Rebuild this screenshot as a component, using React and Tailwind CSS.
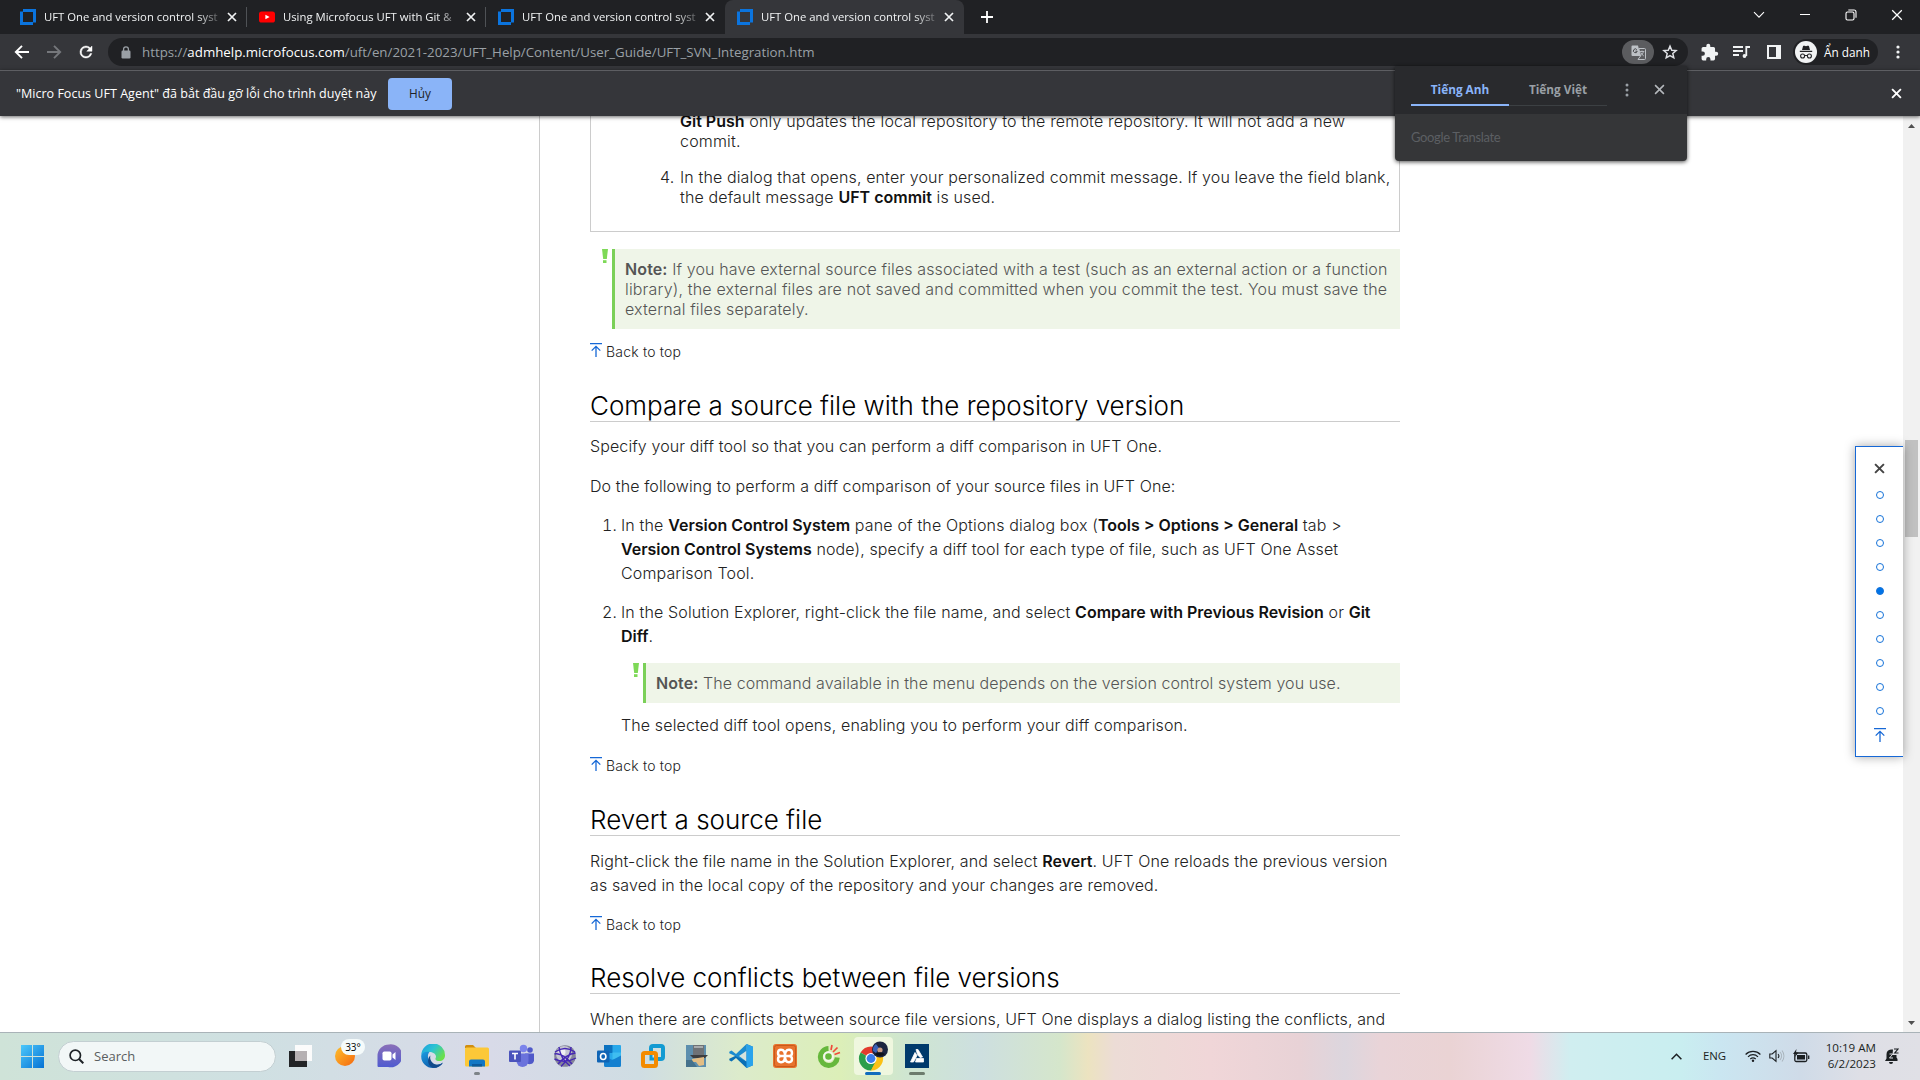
import React from 'react';

const TABS = [
  { title: 'UFT One and version control syst', kind: 'mf' },
  { title: 'Using Microfocus UFT with Git &', kind: 'yt' },
  { title: 'UFT One and version control syst', kind: 'mf' },
  { title: 'UFT One and version control syst', kind: 'mf', active: true },
];

function Cross({ size = 10, stroke = 1.6, className = '' }) {
  return (
    <svg width={size} height={size} viewBox="0 0 10 10" className={className} fill="none" stroke="currentColor" strokeWidth={stroke}>
      <path d="M1 1L9 9M9 1L1 9" />
    </svg>
  );
}

function Favicon({ kind }) {
  if (kind === 'yt') {
    return (
      <svg width="16" height="16" viewBox="0 0 16 16" className="shrink-0">
        <rect x="0" y="2.5" width="16" height="11" rx="2.6" fill="#f00" />
        <path d="M6.4 5.7L10.6 8L6.4 10.3Z" fill="#fff" />
      </svg>
    );
  }
  return (
    <svg width="16" height="16" viewBox="0 0 16 16" className="shrink-0" fill="#0b74de">
      <path d="M3 0H16V13.5H13V3H3Z" />
      <path d="M0 2.5H3V13H13V16H0Z" />
    </svg>
  );
}

function Tab({ tab, separator }) {
  return (
    <div className={`relative flex h-[34px] w-[239px] items-center pl-3 ${tab.active ? 'rounded-t-lg bg-[#35363a]' : ''}`}>
      <Favicon kind={tab.kind} />
      <div className="ml-2 w-[174px] whitespace-nowrap text-[11.3px] leading-[18px] text-[#f1f3f4] [mask-image:linear-gradient(to_right,#000_88%,rgba(0,0,0,0.25))]">
        {tab.title}
      </div>
      <Cross size={10} stroke={1.7} className="ml-[9px] text-[#f1f3f4]" />
      {separator && <div className="absolute top-[7px] right-0 h-5 w-px bg-[#4f5256]" />}
    </div>
  );
}

function TabStrip() {
  return (
    <div className="flex h-[34px] bg-[#202124] pl-2">
      {TABS.map((tab, i) => (
        <Tab key={i} tab={tab} separator={i < 2} />
      ))}
      <div className="flex w-[46px] items-center justify-center">
        <svg width="14" height="14" viewBox="0 0 14 14" stroke="#fff" strokeWidth="1.8"><path d="M7 1V13M1 7H13" /></svg>
      </div>
      <div className="ml-auto flex text-white">
        <div className="flex h-[29px] w-[46px] items-center justify-center">
          <svg width="12" height="8" viewBox="0 0 12 8" fill="none" stroke="currentColor" strokeWidth="1.1"><path d="M1 1.2L6 6.2L11 1.2" /></svg>
        </div>
        <div className="flex h-[29px] w-[46px] items-center justify-center">
          <div className="h-px w-2.5 bg-white" />
        </div>
        <div className="flex h-[29px] w-[46px] items-center justify-center">
          <svg width="12" height="12" viewBox="0 0 12 12" fill="none" stroke="currentColor" strokeWidth="1.1">
            <rect x="1" y="3" width="8" height="8" rx="1.5" /><path d="M3.3 1H9A2 2 0 0 1 11 3V8.8" />
          </svg>
        </div>
        <div className="flex h-[29px] w-[46px] items-center justify-center">
          <Cross size={12} stroke={1.05} />
        </div>
      </div>
    </div>
  );
}

function Toolbar() {
  return (
    <div className="flex h-[36px] items-center bg-[#35363a] pb-1 pt-1">
      <div className="flex w-[44px] items-center justify-center">
        <svg width="16" height="16" viewBox="0 0 16 16" fill="none" stroke="#fff" strokeWidth="1.9"><path d="M15 8H2.2M8 1.8L1.8 8L8 14.2" /></svg>
      </div>
      <div className="flex w-[20px] items-center justify-center">
        <svg width="16" height="16" viewBox="0 0 16 16" fill="none" stroke="#75777b" strokeWidth="1.9" className="shrink-0"><path d="M1 8H13.8M8 1.8L14.2 8L8 14.2" /></svg>
      </div>
      <div className="flex w-[44px] items-center justify-center">
        <svg width="18" height="18" viewBox="0 0 24 24" fill="#fff" className="shrink-0"><path d="M17.65 6.35A7.96 7.96 0 0 0 12 4a8 8 0 1 0 7.73 10h-2.08A6 6 0 1 1 12 6c1.66 0 3.14.69 4.22 1.78L13 11h7V4z" stroke="#fff" strokeWidth=".6" /></svg>
      </div>
      <div className="flex h-7 w-[1580px] items-center rounded-full bg-[#202124] pl-[13px] pr-[10px]">
        <svg width="10" height="13" viewBox="0 0 10 13"><rect x="0.5" y="4.5" width="9" height="8" rx="1.2" fill="#9aa0a6" /><path d="M2.6 5V3.2a2.4 2.4 0 0 1 4.8 0V5" fill="none" stroke="#9aa0a6" strokeWidth="1.3" /></svg>
        <div className="ml-[11px] whitespace-nowrap text-[13.3px] leading-5 text-[#9aa0a6]">
          https://<span className="text-white">admhelp.microfocus.com</span>/uft/en/2021-2023/UFT_Help/Content/User_Guide/UFT_SVN_Integration.htm
        </div>
        <div className="ml-auto flex h-6 w-8 items-center justify-center rounded-full bg-[#5b5c5f]">
          <svg width="15" height="15" viewBox="0 0 15 15">
            <path d="M1.5 .5H7L9.5 11H1.5A1 1 0 0 1 .5 10V1.5A1 1 0 0 1 1.5 .5Z" fill="#bdc1c6" />
            <path d="M7.8 3.5H13.5A1 1 0 0 1 14.5 4.5V13.5A1 1 0 0 1 13.5 14.5H7L9.5 11Z" fill="none" stroke="#bdc1c6" />
            <path d="M5.8 4.6A1.9 1.9 0 1 0 6.2 6.2H4.4" fill="none" stroke="#46474a" strokeWidth="1" />
            <path d="M9 6.5H13.3M11 5.5V6.5M12.4 6.5C12 8.6 10.8 10 9.6 10.8M9.8 7.5C10.5 9 11.5 10 12.8 11" fill="none" stroke="#bdc1c6" strokeWidth=".9" />
          </svg>
        </div>
        <svg width="16" height="16" viewBox="0 0 24 24" fill="none" stroke="#dfe1e5" strokeWidth="2.2" className="ml-2"><path d="M12 3.2L14.6 9.3L21.2 9.9L16.2 14.2L17.7 20.7L12 17.3L6.3 20.7L7.8 14.2L2.8 9.9L9.4 9.3Z" /></svg>
      </div>
      <div className="ml-[12px] flex items-center">
        <svg width="19" height="19" viewBox="0 0 24 24" fill="#f1f3f4"><path d="M20.5 11H19V7a2 2 0 0 0-2-2h-4V3.5a2.5 2.5 0 0 0-5 0V5H4a2 2 0 0 0-2 2v3.8h1.5a2.7 2.7 0 0 1 0 5.4H2V20a2 2 0 0 0 2 2h3.8v-1.5a2.7 2.7 0 0 1 5.4 0V22H17a2 2 0 0 0 2-2v-4h1.5a2.5 2.5 0 0 0 0-5z" /></svg>
        <svg width="17" height="14" viewBox="0 0 17 14" className="ml-[14px]" fill="none" stroke="#f1f3f4" strokeWidth="1.8"><path d="M0 2H10M0 6H10M0 10H6M17 2H13.3V11" /><circle cx="11.5" cy="11" r="1.9" fill="#f1f3f4" stroke="none" /></svg>
        <div className="ml-[17px] h-[14px] w-[14px] border-2 border-r-[5px] border-[#f1f3f4]" />
        <div className="ml-[12px] flex h-[26px] w-[85px] items-center rounded-full bg-[#202124] pl-0.5">
          <div className="flex h-[22px] w-[22px] items-center justify-center rounded-full bg-[#f1f3f4]">
            <svg width="14" height="15" viewBox="0 0 14 15" fill="#202124">
              <path d="M4 1.2C4.5.6 5 .8 7 1.2 9 .8 9.5.6 10 1.2L11 5H3ZM.8 5.8H13.2V7H.8Z" />
              <path d="M5.5 10.8Q7 10 8.5 10.8" fill="none" stroke="#202124" />
              <circle cx="3.6" cy="11" r="2" fill="none" stroke="#202124" strokeWidth="1.1" /><circle cx="10.4" cy="11" r="2" fill="none" stroke="#202124" strokeWidth="1.1" />
            </svg>
          </div>
          <span className="ml-[7px] whitespace-nowrap text-[11.8px] leading-4 text-white">Ẩn danh</span>
        </div>
        <svg width="4" height="14" viewBox="0 0 4 14" fill="#f1f3f4" className="ml-[18px]"><circle cx="2" cy="2" r="1.6" /><circle cx="2" cy="7" r="1.6" /><circle cx="2" cy="12" r="1.6" /></svg>
      </div>
    </div>
  );
}

function InfoBar() {
  return (
    <div className="relative z-10 flex h-[46px] items-center border-t border-[#5d5e62] bg-[#35363a] pl-4 pr-[18px] shadow-[0_1px_4px_rgba(0,0,0,0.6)]">
      <div className="w-[360px] whitespace-nowrap text-[12.55px] leading-5 text-white">
        &quot;Micro Focus UFT Agent&quot; đã bắt đầu gỡ lỗi cho trình duyệt này
      </div>
      <button className="ml-[12px] h-8 w-16 rounded bg-[#8ab4f8] text-[11.8px] text-[#202124]">Hủy</button>
      <Cross size={11} stroke={1.7} className="ml-auto text-white" />
    </div>
  );
}

function TranslatePopup() {
  return (
    <div className="absolute top-[66px] left-[1395px] z-20 h-[95px] w-[292px] overflow-hidden rounded-b bg-[#353638] shadow-[0_1px_4px_rgba(0,0,0,0.7)]">
      <div className="flex h-12 items-start bg-[#292a2d] pl-4">
        <div className="flex h-10 w-[98px] items-center justify-center border-b-2 border-[#8ab4f8] pt-[9px] text-[11.8px] font-bold text-[#8ab4f8]">Tiếng Anh</div>
        <div className="flex h-10 w-[98px] items-center justify-center border-b border-[#3c4043] pt-[9px] text-[11.8px] font-bold text-[#9aa0a6]">Tiếng Việt</div>
        <svg width="4" height="14" viewBox="0 0 4 14" fill="#9aa0a6" className="ml-[18px] mt-[17px]"><circle cx="2" cy="2" r="1.5" /><circle cx="2" cy="7" r="1.5" /><circle cx="2" cy="12" r="1.5" /></svg>
        <Cross size={11} stroke={1.4} className="ml-[25px] mt-[18px] text-[#b4b8bc]" />
      </div>
      <div className="pt-[13px] pl-4 font-['Lato'] text-[13px] leading-5 tracking-[-0.35px] text-[#5c5f63]">Google Translate</div>
    </div>
  );
}

function TopArrow() {
  return (
    <svg width="12" height="14" viewBox="0 0 12 14" fill="none" stroke="#1668d6" strokeWidth="1.3">
      <path d="M0 .6H12M6 14V3.3M1.7 7.6L6 3.3L10.3 7.6" />
    </svg>
  );
}

function BackToTop() {
  return (
    <div className="flex h-5 items-start">
      <div className="mt-px"><TopArrow /></div>
      <span className="ml-1 text-sm leading-5 font-light tracking-[0.2px] text-[#222]">Back to top</span>
    </div>
  );
}

function Heading({ children, className = 'mt-[27px]' }) {
  return <h2 className={`${className} h-[33px] whitespace-nowrap border-b border-[#ccc] text-[26px] leading-[34px] font-light tracking-normal text-black`}>{children}</h2>;
}

function Note({ children }) {
  return (
    <div className="flex">
      <svg width="6" height="14" viewBox="0 0 6 14" fill="#7ed957" className="mr-1"><path d="M0 0H6L4.8 10H1.2Z" /><rect x="1" y="11.2" width="3.5" height="2.8" /></svg>
      <div className="flex-1 border-l-[3px] border-[#7bd058] bg-[#eff5e8] py-[10px] pl-[10px] leading-5 text-[#555]">{children}</div>
    </div>
  );
}

function B({ children }) {
  return <b className="font-semibold tracking-normal text-[#111]">{children}</b>;
}

function Article() {
  return (
    <div className="ml-[539px] h-full w-[861px] border-l border-[#ccc] pl-[50px] text-base leading-6 font-light tracking-[0.14px] whitespace-nowrap text-[#222]">
      <div className="flex h-[116px] flex-col border-x border-b border-[#ccc] pl-[69px] leading-5">
        <div className="-mt-[5px] pl-[20px] tracking-[0.18px]">
          <p><B>Git Push</B> only updates the local repository to the remote repository. It will not add a new</p>
          <p>commit.</p>
        </div>
        <div className="mt-4 flex">
          <span className="w-[20px] shrink-0">4.</span>
          <div>
            <p className="tracking-[0.125px]">In the dialog that opens, enter your personalized commit message. If you leave the field blank,</p>
            <p>the default message <B>UFT commit</B> is used.</p>
          </div>
        </div>
      </div>
      <div className="mt-[17px] mb-[13px] pl-[12px]">
        <Note>
          <p className="tracking-[0.125px]"><b className="font-semibold">Note:</b> If you have external source files associated with a test (such as an external action or a function</p>
          <p className="tracking-[0.17px]">library), the external files are not saved and committed when you commit the test. You must save the</p>
          <p>external files separately.</p>
        </Note>
      </div>
      <BackToTop />
      <Heading>Compare a source file with the repository version</Heading>
      <p className="mt-[12px] tracking-[0.11px]">Specify your diff tool so that you can perform a diff comparison in UFT One.</p>
      <p className="mt-4 tracking-[0.095px]">Do the following to perform a diff comparison of your source files in UFT One:</p>
      <div className="mt-[15px] flex pl-3">
        <span className="mr-1 w-[15px] text-right tabular-nums">1.</span>
        <div>
          <p className="tracking-[0.16px]">In the <B>Version Control System</B> pane of the Options dialog box (<B>Tools &gt; Options &gt; General</B> tab &gt;</p>
          <p className="tracking-[0.12px]"><B>Version Control Systems</B> node), specify a diff tool for each type of file, such as UFT One Asset</p>
          <p>Comparison Tool.</p>
        </div>
      </div>
      <div className="mt-[15px] flex pl-3">
        <span className="mr-1 w-[15px] text-right tabular-nums">2.</span>
        <div className="flex-1">
          <p>In the Solution Explorer, right-click the file name, and select <B>Compare with Previous Revision</B> or <B>Git</B></p>
          <p><B>Diff</B>.</p>
          <div className="mt-[15px] mb-[10px] pl-[12px] tracking-[0.085px]">
            <Note><b className="font-semibold">Note:</b> The command available in the menu depends on the version control system you use.</Note>
          </div>
          <p className="tracking-[0.125px]">The selected diff tool opens, enabling you to perform your diff comparison.</p>
        </div>
      </div>
      <div className="mt-[19px]"><BackToTop /></div>
      <Heading>Revert a source file</Heading>
      <p className="mt-[13px] tracking-[0.125px]">Right-click the file name in the Solution Explorer, and select <B>Revert</B>. UFT One reloads the previous version</p>
      <p className="tracking-[0.12px]">as saved in the local copy of the repository and your changes are removed.</p>
      <div className="mt-[18px]"><BackToTop /></div>
      <Heading className="mt-[26px]">Resolve conflicts between file versions</Heading>
      <p className="mt-[13px] tracking-[0.11px]">When there are conflicts between source file versions, UFT One displays a dialog listing the conflicts, and</p>
    </div>
  );
}

function SideNav() {
  return (
    <div className="absolute top-[330px] right-[17px] flex h-[311px] w-[48px] flex-col items-center border border-r-0 border-[#1668d6] bg-white pt-[16px] shadow-[0_0_10px_rgba(0,0,0,0.35)]">
      <Cross size={11} stroke={1.8} className="text-[#444]" />
      <div className="mt-[17px] flex flex-col gap-4">
        {Array.from({ length: 10 }, (_, i) => (
          <div key={i} className={`h-2 w-2 rounded-full border border-[#1673d9] ${i === 4 ? 'bg-[#0073e7]' : ''}`} />
        ))}
      </div>
      <div className="mt-[13px]"><TopArrow /></div>
    </div>
  );
}

function Scrollbar() {
  return (
    <div className="flex w-[17px] flex-col items-center bg-[#f1f1f1]">
      <svg width="7" height="4" viewBox="0 0 7 4" className="mt-[8px]" fill="#505050"><path d="M0 4L3.5 0L7 4Z" /></svg>
      <div className="mt-[312px] h-[97px] w-[13px] bg-[#c1c1c1]" />
      <svg width="7" height="4" viewBox="0 0 7 4" className="mt-auto mb-[7px]" fill="#505050"><path d="M0 0L3.5 4L7 0Z" /></svg>
    </div>
  );
}

const APP_ICONS = {
  taskview: (
    <svg width="24" height="24" viewBox="0 0 24 24"><rect x="6" y="1" width="17" height="16" fill="#fbfbfb" /><rect x="0" y="7" width="18" height="16" fill="#222426" /><rect x="6" y="7" width="12" height="10" fill="#b5b0b2" /></svg>
  ),
  weather: (
    <div className="relative h-6 w-6">
      <div className="mt-0.5 ml-0.5 h-5 w-5 rounded-full bg-linear-to-br from-[#fbc02d] to-[#f4660e]" />
      <div className="absolute -top-[5px] left-[8px] flex h-4 w-6 items-center justify-center rounded-full bg-[#f5fbfb] text-[10px] text-black">33°</div>
    </div>
  ),
  chat: (
    <svg width="24" height="24" viewBox="0 0 24 24"><defs><linearGradient id="chat" x1="0" y1="0" x2="0" y2="1"><stop offset="0" stopColor="#8a6fb8" /><stop offset="1" stopColor="#4f5bd0" /></linearGradient></defs><path d="M12 .5A11.5 11.5 0 1 1 11 23H1.5A1 1 0 0 1 .5 22V12A11.5 11.5 0 0 1 12 .5Z" fill="url(#chat)" /><rect x="5.5" y="7.5" width="9" height="9" rx="1.8" fill="#fff" /><path d="M15.5 10.5L18.5 8V16L15.5 13.5Z" fill="#fff" /></svg>
  ),
  edge: (
    <svg width="24" height="24" viewBox="0 0 24 24">
      <defs>
        <linearGradient id="edgeTop" x1="0" y1="0" x2="1" y2="0.6"><stop offset="0" stopColor="#1b9de2" /><stop offset="0.5" stopColor="#2cc3d2" /><stop offset="1" stopColor="#6ae04c" /></linearGradient>
        <linearGradient id="edgeLow" x1="0" y1="0" x2="0.8" y2="1"><stop offset="0" stopColor="#1b9de2" /><stop offset="1" stopColor="#0c4fa0" /></linearGradient>
      </defs>
      <path d="M.3 11A11.8 11.8 0 0 1 24 11.5C24 15 21.5 17 18.5 17C15.5 17 14 15.5 14.5 14.5C16.5 10.5 12 8 8.5 8C4 8 1 10 .3 11Z" fill="url(#edgeTop)" />
      <path d="M.2 12C.5 8.5 5 7.3 8.5 8C5.5 11 6.5 19 14 20.5C17.5 21.2 20.5 19.8 22 18.5C20 22 16.5 24 12 24A11.8 11.8 0 0 1 .2 12Z" fill="url(#edgeLow)" />
      <path d="M9.5 11.5C8 15.5 11.5 20.5 16 20.7C18.5 20.8 20.8 19.6 22 18.5C20 22.5 15 24.5 11.5 23.5C6 21.5 6 14 9.5 11.5Z" fill="#114a8b" />
    </svg>
  ),
  explorer: (
    <svg width="24" height="24" viewBox="0 0 24 24"><path d="M0 2.5A1.5 1.5 0 0 1 1.5 1H8L11 4H0Z" fill="#d18e10" /><rect x="0" y="3.5" width="24" height="19" rx="1.5" fill="#fcc838" /><path d="M4 22.5V17.5A2 2 0 0 1 6 15.5H18A2 2 0 0 1 20 17.5V22.5Z" fill="#1277c4" /><path d="M7 22.5V20H17V22.5Z" fill="#0c5a9c" /></svg>
  ),
  teams: (
    <svg width="25" height="24" viewBox="0 0 25 24"><circle cx="21" cy="6" r="2.8" fill="#5059c9" /><circle cx="14.5" cy="4.5" r="3.7" fill="#7b83eb" /><path d="M16 9.5H25V16.5A4.3 4.3 0 0 1 17 18Z" fill="#5059c9" /><path d="M8 9.5H19.5V17A6 6 0 0 1 7.5 17Z" fill="#6a72dc" /><rect x="0" y="6.5" width="12" height="11.5" rx="1" fill="#4b53bc" /><path d="M3 9.5H9M6 9.5V15.5" stroke="#fff" strokeWidth="1.6" /></svg>
  ),
  globe: (
    <svg width="24" height="24" viewBox="0 0 24 24" fill="none">
      <circle cx="12" cy="12" r="10.8" fill="#84849a" /><circle cx="11" cy="10" r="8" fill="#c6c6d2" /><circle cx="9" cy="8" r="3.5" fill="#f0f0f4" />
      <path d="M1.5 10Q9 8 19 20M22.5 9Q14 10 5 20M6 3Q7 14 17 22M18 3Q18 13 8 22.5M2 8Q12 1 22 8M1.5 15Q12 20 23 14" stroke="#4426b4" strokeWidth="1.4" />
    </svg>
  ),
  outlook: (
    <svg width="24" height="24" viewBox="0 0 24 24"><rect x="7" y="1" width="17" height="15" rx="1" fill="#28a8ea" /><path d="M7 1H15.5V9H7Z" fill="#0c72c0" /><path d="M15.5 8.5H24V15H15.5Z" fill="#3fbdf0" /><path d="M7 12L15.5 16L24 11.5V21.5A1.5 1.5 0 0 1 22.5 23H8.5A1.5 1.5 0 0 1 7 21.5Z" fill="#1480d0" /><rect x="0" y="6.5" width="12.5" height="12" rx="1" fill="#0f64b5" /><ellipse cx="6.2" cy="12.5" rx="2.7" ry="3" fill="none" stroke="#fff" strokeWidth="1.6" /></svg>
  ),
  vmware: (
    <svg width="24" height="24" viewBox="0 0 24 24" fill="none" strokeWidth="4"><path d="M10 9V4A2 2 0 0 1 12 2H20A2 2 0 0 1 22 4V13A2 2 0 0 1 20 15H16" stroke="#139bd2" /><rect x="2" y="9" width="13" height="13" rx="1.5" stroke="#f38b00" /><path d="M10 11V15H13" stroke="#139bd2" strokeWidth="3" /></svg>
  ),
  installer: (
    <svg width="24" height="24" viewBox="0 0 24 24"><rect x="1" y="1" width="20" height="22" fill="#5d8fae" /><rect x="8" y="1" width="11" height="10" fill="#6f7276" /><rect x="9" y="2" width="9" height="2" fill="#a8abad" /><path d="M5 11H23L20 14H8Z" fill="#3c3e40" /><path d="M7 15L19 13V21L14 22L11 18H7Z" fill="#e3bd84" /><path d="M1 16H7L12 23H1Z" fill="#45718c" /></svg>
  ),
  vscode: (
    <svg width="24" height="24" viewBox="0 0 24 24"><path d="M17.5 0L24 2.8V21.2L17.5 24L7 14L2.5 17.5L.3 16.3V14.8L17.5 6.5Z" fill="#0a6fb5" /><path d="M17.5 0V17.6L.3 9.2V7.7L2.5 6.5L7 10Z" fill="#1b8bd0" /><path d="M17.5 6.7L10 12L17.5 17.5Z" fill="#d5e2dd" /><path d="M17.5 0L24 2.8V21.2L17.5 24Z" fill="#29a3ec" /></svg>
  ),
  xampp: (
    <svg width="24" height="24" viewBox="0 0 24 24" fill="none"><rect width="24" height="24" rx="3" fill="#e8722d" /><rect x="1.5" y="1.5" width="21" height="21" rx="2" stroke="#c85a1c" /><path d="M8 12H16M8 12C4 12 4 5.8 8 5.8C11 5.8 12 8 12 12C12 16 11 18.200 8 18.200C4 18.200 4 12 8 12M16 12C20 12 20 5.800 16 5.800C13 5.800 12 8 12 12C12 16 13 18.200 16 18.200C20 18.200 20 12 16 12" stroke="#fff" strokeWidth="2.4" /></svg>
  ),
  coccoc: (
    <svg width="24" height="24" viewBox="0 0 24 24" fill="none"><path d="M11.5 4.5A8.5 8.5 0 1 0 20.3 13.5" stroke="#66b83c" strokeWidth="5" /><circle cx="11.5" cy="12.5" r="4.3" fill="#66b83c" stroke="#f4f8ec" strokeWidth="2" /><path d="M14 6L15 1M16 8L20.5 3.5M17.5 10.5L23 8.5" stroke="#f04b3a" strokeWidth="1.7" /></svg>
  ),
  chrome: (
    <div className="flex h-[38px] w-[39px] items-center justify-center rounded bg-[#eff7df]">
      <svg width="30" height="30" viewBox="0 0 30 30">
        <path d="M13 17.5L2.6 11.5A12 12 0 0 1 23.4 11.5Z" fill="#e33b2e" />
        <path d="M13 17.5V29.5A12 12 0 0 1 2.6 11.5Z" fill="#2c9e4b" />
        <path d="M13 17.5L23.4 11.5A12 12 0 0 1 13 29.5Z" fill="#fbc116" />
        <path d="M13 12H23.6L13 17.5Z" fill="#e33b2e" /><path d="M8 20L13 29.5L18 20Z" fill="#2c9e4b" /><path d="M18 20L13 29.5L21 25L24 15H18Z" fill="#fbc116" />
        <circle cx="13" cy="17.5" r="5.6" fill="#fff" /><circle cx="13" cy="17.5" r="4.4" fill="#3a7cec" />
        <circle cx="22" cy="8.5" r="8" fill="#1c2540" /><path d="M15 10A7 7 0 0 1 18 3L21 7L18 12Z" fill="#3a62b8" /><circle cx="22" cy="9" r="2.6" fill="#c99c84" /><path d="M17 13Q22 9.5 27 13A7 7 0 0 1 17 13Z" fill="#0f1119" />
      </svg>
    </div>
  ),
  astra: (
    <svg width="24" height="24" viewBox="0 0 24 24" stroke="#fff" strokeWidth=".8" strokeLinejoin="round"><rect width="24" height="24" fill="#003a6c" stroke="none" /><path d="M11 5.5H13L17.5 13L15 13.5L12.5 10.5ZM10 8.5L12 11.5L8.5 18H5.5ZM11.5 14.5L18.5 14.5L18.5 18H10.5Z" fill="#fff" /></svg>
  ),
};

const APPS = ['taskview', 'weather', 'chat', 'edge', 'explorer', 'teams', 'globe', 'outlook', 'vmware', 'installer', 'vscode', 'xampp', 'coccoc', 'chrome', 'astra'];
const MARKS = { explorer: 'w-1.5 bg-[#7d8388]', chrome: 'w-4 bg-[#0f6cbd]', astra: 'w-4 bg-[#6c7b6c]' };

function Taskbar() {
  return (
    <div className="flex h-12 items-center border-t border-[#a9b3b8] bg-[linear-gradient(90deg,#cfe3d8_0px,#cfe0e2_250px,#d8dae8_490px,#cfdde3_640px,#dcebcb_740px,#dcefb8_840px,#cfe6d0_905px,#cddfe0_980px,#d5e6cb_1060px,#ece3c0_1088px,#ecdcd6_1115px,#f0d6d8_1210px,#e8d2d6_1300px,#dcd6de_1345px,#e9d4d8_1380px,#ead3d4_1450px,#efdbe6_1530px,#d0eef0_1570px,#c9eef0_1680px,#cae6f1_1720px,#cfdbe8_1800px,#dedfe6_1860px,#e0e0e6_1920px)] pb-px pl-[21px]">
      <svg width="23" height="23" viewBox="0 0 23 23">
        <defs><linearGradient id="win" x1="0" y1="0" x2="1" y2="1"><stop offset="0" stopColor="#4cc8fb" /><stop offset="1" stopColor="#0672d4" /></linearGradient></defs>
        <path d="M0 0H11V11H0ZM12 0H23V11H12ZM0 12H11V23H0ZM12 12H23V23H12Z" fill="url(#win)" />
      </svg>
      <div className="ml-[14px] flex h-[31px] w-[218px] items-center rounded-full border border-[#c3cfd2] bg-[#f2f7f7] pl-2.5">
        <svg width="15" height="15" viewBox="0 0 15 15" fill="none" stroke="#1d2226" strokeWidth="1.7"><circle cx="6.3" cy="6.3" r="5.2" /><path d="M10 10L14.3 14.3" strokeWidth="2" /></svg>
        <span className="ml-[10px] text-[13px] leading-4 text-[#5a5e60]">Search</span>
      </div>
      <div className="ml-[3px] flex h-full">
        {APPS.map((name) => (
          <div key={name} className="relative flex h-full w-11 items-center justify-center">
            {APP_ICONS[name]}
            {MARKS[name] && <div className={`absolute bottom-[4px] h-[3px] rounded-full ${MARKS[name]}`} />}
          </div>
        ))}
      </div>
      <div className="ml-auto flex items-center text-[#1b1f22]">
        <svg width="11" height="7" viewBox="0 0 11 7" fill="none" stroke="currentColor" strokeWidth="1.5"><path d="M.6 6.2L5.5 1.2L10.4 6.2" /></svg>
        <span className="ml-[21px] w-[23px] text-[11.4px] leading-4 tracking-[-0.1px]">ENG</span>
        <svg width="16" height="12" viewBox="0 0 16 12" className="ml-[19px]" fill="none" stroke="currentColor" strokeWidth="1.2"><path d="M.6 4.5A10.5 10.5 0 0 1 15.4 4.5M3 6.8A7 7 0 0 1 13 6.8M5.3 9A4 4 0 0 1 10.7 9" /><circle cx="8" cy="10.7" r="1.2" fill="currentColor" stroke="none" /></svg>
        <svg width="16" height="14" viewBox="0 0 16 14" className="ml-[8px]" fill="none" stroke="currentColor" strokeWidth="1.1"><path d="M.8 5V9H3.2L7 12.3V1.7L3.2 5Z" /><path d="M9 5A3 3 0 0 1 9 9" /><path d="M11 3A6 6 0 0 1 11 11M13 1.5A9 9 0 0 1 13 12.5" stroke="#a9b3bb" /></svg>
        <svg width="17" height="14" viewBox="0 0 17 14" className="ml-[8px]" fill="none" stroke="currentColor" strokeWidth="1.3"><rect x="1.8" y="4" width="12" height="8.5" rx="1.5" /><rect x="4" y="6" width="8" height="4.5" fill="currentColor" stroke="none" /><path d="M15.7 6.5V10" /><path d="M3.5 0L0 5H2.5L2 8L5.5 3.5H3Z" fill="currentColor" stroke="none" /></svg>
        <div className="ml-[15px] w-[51px] text-right text-[11.6px] leading-4 whitespace-nowrap">
          <div>10:19 AM</div>
          <div>6/2/2023</div>
        </div>
        <svg width="14" height="16" viewBox="0 0 14 16" className="ml-[9px] mr-[21px]" fill="currentColor"><path d="M6 1.5A5 5 0 0 0 1.5 6.5V10.5L0 13H12.5V11L11.5 9.5V7H7.5L8 1.5ZM4 14H8A2 2 0 0 1 4 14Z" /><path d="M9 1H13L9.8 5H13.5" fill="none" stroke="currentColor" strokeWidth="1.2" /><path d="M4.5 6H7.8L4.5 10H8" fill="none" stroke="#dfe0e6" /></svg>
      </div>
    </div>
  );
}

export default function App() {
  return (
    <div className="relative flex h-[1080px] w-[1920px] flex-col overflow-hidden bg-white font-['Open_Sans',sans-serif]">
      <TabStrip />
      <Toolbar />
      <InfoBar />
      <TranslatePopup />
      <div className="relative flex h-[916px] overflow-hidden">
        <div className="flex-1 font-['Inter',sans-serif]"><Article /></div>
        <Scrollbar />
        <SideNav />
      </div>
      <Taskbar />
    </div>
  );
}
